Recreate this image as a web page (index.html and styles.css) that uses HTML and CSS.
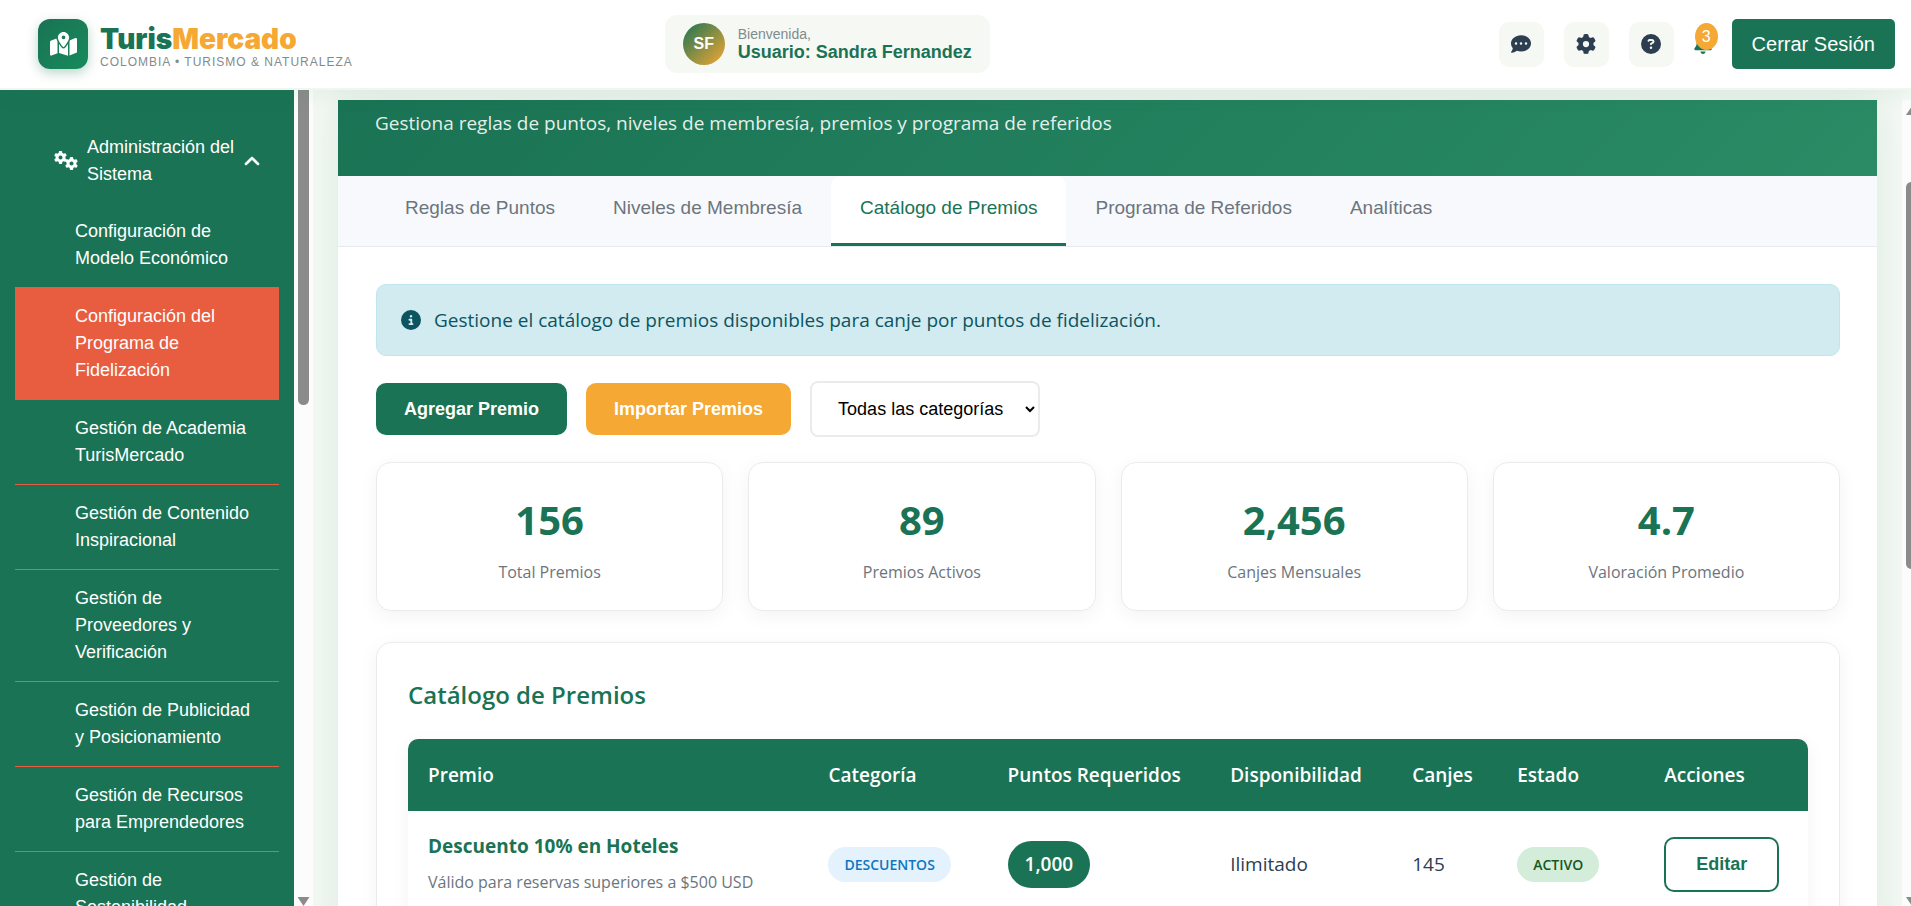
FILE: index.html
```html
<!DOCTYPE html>
<html lang="es">
    <head>
        <title>TurisMercado - Programa de Fidelización</title>
        <meta charset="UTF-8">
        <meta name="viewport" content="width=device-width, initial-scale=1.0">
        <link rel="stylesheet" href="styles.css">
    </head>
    <body>
        <svg class="sprite" aria-hidden="true">
            <symbol id="gear" viewBox="0 0 512 512"><path d="M495.9 166.6c3.2 8.7 .5 18.4-6.4 24.6l-43.3 39.4c1.1 8.3 1.7 16.8 1.7 25.4s-.6 17.1-1.7 25.4l43.3 39.4c6.9 6.2 9.6 15.9 6.4 24.6c-4.4 11.9-9.7 23.3-15.8 34.3l-4.7 8.1c-6.6 11-14 21.4-22.1 31.2c-5.9 7.2-15.7 9.6-24.5 6.8l-55.7-17.7c-13.4 10.3-28.2 18.9-44 25.4l-12.5 57.1c-2 9.1-9 16.3-18.2 17.8c-13.8 2.3-28 3.5-42.5 3.5s-28.7-1.2-42.5-3.5c-9.2-1.5-16.2-8.7-18.2-17.8l-12.5-57.1c-15.8-6.5-30.6-15.1-44-25.4L83.1 425.9c-8.8 2.8-18.6 .3-24.5-6.8c-8.1-9.8-15.5-20.2-22.1-31.2l-4.7-8.1c-6.1-11-11.4-22.4-15.8-34.3c-3.2-8.7-.5-18.4 6.4-24.6l43.3-39.4C64.6 273.1 64 264.6 64 256s.6-17.1 1.7-25.4L22.4 191.2c-6.9-6.2-9.6-15.9-6.4-24.6c4.4-11.9 9.7-23.3 15.8-34.3l4.7-8.1c6.6-11 14-21.4 22.1-31.2c5.9-7.2 15.7-9.6 24.5-6.8l55.7 17.7c13.4-10.3 28.2-18.9 44-25.4l12.5-57.1c2-9.1 9-16.3 18.2-17.8C227.3 1.2 241.5 0 256 0s28.7 1.2 42.5 3.5c9.2 1.5 16.2 8.7 18.2 17.8l12.5 57.1c15.8 6.5 30.6 15.1 44 25.4l55.7-17.7c8.8-2.8 18.6-.3 24.5 6.8c8.1 9.8 15.5 20.2 22.1 31.2l4.7 8.1c6.1 11 11.4 22.4 15.8 34.3zM256 336a80 80 0 1 0 0-160 80 80 0 1 0 0 160z"/></symbol>
        </svg>

        <header class="header">
            <div class="logo">
                <div class="logo-icon">
                    <svg width="27" height="24" viewBox="0 0 576 512" fill="currentColor"><path d="M408 120c0 54.6-73.1 151.9-105.2 192c-7.7 9.6-22 9.6-29.6 0C241.1 271.9 168 174.6 168 120C168 53.7 221.7 0 288 0s120 53.7 120 120zm8 80.4c3.5-6.9 6.7-13.8 9.6-20.6c.5-1.2 1-2.5 1.5-3.7l116-46.4C558.9 123.4 576 135 576 152V422.8c0 9.8-6 18.6-15.1 22.3L416 503V200.4zM137.6 138.3c2.4 14.1 7.2 28.3 12.8 41.5c2.9 6.8 6.1 13.7 9.6 20.6V451.8L32.9 502.7C17.1 509 0 497.4 0 480.4V209.6c0-9.8 6-18.6 15.1-22.3l122.6-49zM327.8 332c13.9-17.4 35.7-45.7 56.2-77V504.3L192 449.4V255c20.5 31.3 42.3 59.6 56.2 77c20.5 25.6 59.1 25.6 79.6 0zM288 152a40 40 0 1 0 0-80 40 40 0 1 0 0 80z"/></svg>
                </div>
                <div class="logo-text">
                    <div class="logo-name">Turis<span>Mercado</span></div>
                    <div class="logo-tagline">COLOMBIA • TURISMO &amp; NATURALEZA</div>
                </div>
            </div>

            <div class="user-box">
                <div class="avatar">SF</div>
                <div>
                    <div class="user-welcome">Bienvenida,</div>
                    <div class="user-name">Usuario: Sandra Fernandez</div>
                </div>
            </div>

            <div class="header-actions">
                <button type="button" class="icon-btn" aria-label="Mensajes">
                    <svg width="20" height="20" viewBox="0 0 512 512" fill="currentColor"><path d="M256 448c141.4 0 256-93.1 256-208S397.4 32 256 32S0 125.1 0 240c0 45.1 17.7 86.8 47.7 120.9c-1.9 24.5-11.4 46.3-21.4 62.9c-5.5 9.2-11.1 16.6-15.2 21.6c-2.1 2.5-3.7 4.4-4.9 5.7l-1.6 1.7c-4.6 4.6-5.9 11.4-3.4 17.4c2.5 6 8.3 9.9 14.8 9.9c28.7 0 57.6-8.9 81.6-19.3c22.9-10 42.4-21.9 54.3-30.6c31.8 11.5 67 17.9 104.1 17.9zM128 208a32 32 0 1 1 0 64 32 32 0 1 1 0-64zm128 0a32 32 0 1 1 0 64 32 32 0 1 1 0-64zm96 32a32 32 0 1 1 64 0 32 32 0 1 1 -64 0z"/></svg>
                </button>
                <button type="button" class="icon-btn" aria-label="Ajustes">
                    <svg width="20" height="20" fill="currentColor"><use href="#gear"/></svg>
                </button>
                <button type="button" class="icon-btn" aria-label="Ayuda">
                    <svg width="20" height="20" viewBox="0 0 512 512" fill="currentColor"><path d="M256 512A256 256 0 1 0 256 0a256 256 0 1 0 0 512zM169.8 165.3c7.9-22.3 29.1-37.3 52.8-37.3h58.3c34.9 0 63.1 28.3 63.1 63.1c0 22.6-12.1 43.5-31.7 54.8L280 264.4c-.2 13-10.9 23.6-24 23.6c-13.3 0-24-10.7-24-24V250.5c0-8.6 4.6-16.5 12.1-20.8l44.3-25.4c4.7-2.7 7.6-7.7 7.6-13.1c0-8.4-6.8-15.1-15.1-15.1H222.6c-3.4 0-6.4 2.1-7.5 5.3l-.4 1.2c-4.4 12.5-18.2 19-30.6 14.6s-19-18.2-14.6-30.6l.4-1.2zM224 352a32 32 0 1 1 64 0 32 32 0 1 1 -64 0z"/></svg>
                </button>
                <button type="button" class="bell" aria-label="Notificaciones">
                    <svg width="18" height="20" viewBox="0 0 448 512" fill="currentColor"><path d="M224 0c-17.7 0-32 14.3-32 32V51.2C119 66 64 130.6 64 208v18.8c0 47-17.3 92.4-48.5 127.6l-7.4 8.3c-8.4 9.4-10.4 22.9-5.3 34.4S19.4 416 32 416H416c12.6 0 24-7.4 29.2-18.9s3.1-25-5.3-34.4l-7.4-8.3C401.3 319.2 384 273.9 384 226.8V208c0-77.4-55-142-128-156.8V32c0-17.7-14.3-32-32-32zm45.3 493.3c12-12 18.7-28.3 18.7-45.3H224 160c0 17 6.7 33.3 18.7 45.3s28.3 18.7 45.3 18.7s33.3-6.7 45.3-18.7z"/></svg>
                    <span class="bell-count">3</span>
                </button>
                <button type="button" class="logout">Cerrar Sesión</button>
            </div>
        </header>

        <div class="page">
            <nav class="sidebar">
                <a href="#" class="menu-head">
                    <svg class="gears" width="25" height="20" fill="currentColor">
                        <use href="#gear" x="0" y="0" width="13" height="13"/>
                        <use href="#gear" x="11" y="6" width="13" height="13"/>
                    </svg>
                    <span class="menu-title">Administración del Sistema</span>
                    <svg width="16" height="16" viewBox="0 0 512 448" fill="currentColor" stroke="currentColor" stroke-width="30"><path d="M233.4 105.4c12.5-12.5 32.8-12.5 45.3 0l192 192c12.5 12.5 12.5 32.8 0 45.3s-32.8 12.5-45.3 0L256 173.3 86.6 342.6c-12.5 12.5-32.8 12.5-45.3 0s-12.5-32.8 0-45.3l192-192z"/></svg>
                </a>
                <a href="#" class="menu-item">Configuración de Modelo Económico</a>
                <a href="#" class="menu-item active">Configuración del Programa de Fidelización</a>
                <a href="#" class="menu-item">Gestión de Academia TurisMercado</a>
                <a href="#" class="menu-item">Gestión de Contenido Inspiracional</a>
                <a href="#" class="menu-item">Gestión de Proveedores y Verificación</a>
                <a href="#" class="menu-item">Gestión de Publicidad y Posicionamiento</a>
                <a href="#" class="menu-item">Gestión de Recursos para Emprendedores</a>
                <a href="#" class="menu-item">Gestión de Sostenibilidad</a>
            </nav>
            <div class="side-scroll">
                <div class="side-thumb"></div>
                <div class="arrow-down"></div>
            </div>

            <main class="main">
                <div class="panel">
                    <div class="hero">Gestiona reglas de puntos, niveles de membresía, premios y programa de referidos</div>

                    <div class="tabs">
                        <button type="button" class="tab">Reglas de Puntos</button>
                        <button type="button" class="tab">Niveles de Membresía</button>
                        <button type="button" class="tab active">Catálogo de Premios</button>
                        <button type="button" class="tab">Programa de Referidos</button>
                        <button type="button" class="tab">Analíticas</button>
                    </div>

                    <div class="content">
                        <div class="info">
                            <svg width="20" height="20" viewBox="0 0 512 512" fill="currentColor"><path d="M256 512A256 256 0 1 0 256 0a256 256 0 1 0 0 512zM216 336h24V272H216c-13.3 0-24-10.7-24-24s10.7-24 24-24h48c13.3 0 24 10.7 24 24v88h8c13.3 0 24 10.7 24 24s-10.7 24-24 24H216c-13.3 0-24-10.7-24-24s10.7-24 24-24zm40-208a32 32 0 1 1 0 64 32 32 0 1 1 0-64z"/></svg>
                            <span>Gestione el catálogo de premios disponibles para canje por puntos de fidelización.</span>
                        </div>

                        <div class="toolbar">
                            <button type="button" class="btn">Agregar Premio</button>
                            <button type="button" class="btn btn-orange">Importar Premios</button>
                            <select class="filter" aria-label="Categoría">
                                <option>Todas las categorías</option>
                            </select>
                        </div>

                        <div class="stats">
                            <div class="stat">
                                <div class="stat-number">156</div>
                                <div class="stat-label">Total Premios</div>
                            </div>
                            <div class="stat">
                                <div class="stat-number">89</div>
                                <div class="stat-label">Premios Activos</div>
                            </div>
                            <div class="stat">
                                <div class="stat-number">2,456</div>
                                <div class="stat-label">Canjes Mensuales</div>
                            </div>
                            <div class="stat">
                                <div class="stat-number">4.7</div>
                                <div class="stat-label">Valoración Promedio</div>
                            </div>
                        </div>

                        <section class="catalog">
                            <h2>Catálogo de Premios</h2>
                            <table class="table">
                                <thead>
                                    <tr>
                                        <th class="col-premio">Premio</th>
                                        <th class="col-categoria">Categoría</th>
                                        <th class="col-puntos">Puntos Requeridos</th>
                                        <th class="col-disp">Disponibilidad</th>
                                        <th class="col-canjes">Canjes</th>
                                        <th class="col-estado">Estado</th>
                                        <th>Acciones</th>
                                    </tr>
                                </thead>
                                <tbody>
                                    <tr>
                                        <td>
                                            <div class="prize-name">Descuento 10% en Hoteles</div>
                                            <div class="prize-text">Válido para reservas superiores a $500 USD</div>
                                        </td>
                                        <td><span class="badge badge-blue">DESCUENTOS</span></td>
                                        <td><span class="points">1,000</span></td>
                                        <td>Ilimitado</td>
                                        <td>145</td>
                                        <td><span class="badge badge-green">ACTIVO</span></td>
                                        <td><button type="button" class="btn-outline">Editar</button></td>
                                    </tr>
                                </tbody>
                            </table>
                        </section>
                    </div>
                </div>
            </main>
            <div class="main-scroll">
                <div class="arrow-up"></div>
                <div class="main-thumb"></div>
                <div class="arrow-down"></div>
            </div>
        </div>
    </body>
</html>
```
FILE: styles.css
```css
*{
    box-sizing: border-box;
}
body{
    margin: 0;
    height: 100vh;
    overflow: hidden;
    display: flex;
    flex-direction: column;
    font-family: "Open Sans", "Noto Sans", sans-serif;
    font-size: 19px;
    color: #2c3e50;
    background-color: #f5f9f4;
}
button, select{
    font-family: "Liberation Sans", Arial, sans-serif;
    cursor: pointer;
}
.sprite{
    display: none;
}

/* header */
.header{
    flex: none;
    height: 90px;
    display: flex;
    align-items: center;
    padding: 0 16px 0 38px;
    background-color: white;
    border-bottom: 2px solid #f1f6f0;
    box-shadow: 0 4px 20px rgba(26,115,84,0.08);
    font-family: "Liberation Sans", Arial, sans-serif;
    position: relative;
    z-index: 2;
}
.logo{
    flex: 9 0 0;
    display: flex;
    align-items: center;
    gap: 12px;
}
.logo-icon{
    width: 50px;
    height: 50px;
    border-radius: 12px;
    display: flex;
    align-items: center;
    justify-content: center;
    color: white;
    background: linear-gradient(135deg, #1a7354, #178a5c);
    box-shadow: 0 4px 12px rgba(26,115,84,0.3);
}
.logo-text{
    padding-top: 3px;
}
.logo-name{
    font-family: Inter, sans-serif;
    font-size: 28px;
    font-weight: 900;
    line-height: 32px;
    color: #1a7354;
}
.logo-name span{
    color: #f5a833;
}
.logo-tagline{
    font-size: 12px;
    line-height: 14px;
    letter-spacing: 1px;
    color: #7f8c8d;
}
.user-box{
    display: flex;
    align-items: center;
    gap: 13px;
    padding: 8px 18px;
    border-radius: 12px;
    background-color: #f6f8f4;
}
.avatar{
    width: 42px;
    height: 42px;
    border-radius: 50%;
    display: flex;
    align-items: center;
    justify-content: center;
    font-size: 16px;
    font-weight: bold;
    color: white;
    background: linear-gradient(135deg, #1a7354, #f5a833);
}
.user-welcome{
    font-size: 14px;
    line-height: 16px;
    color: #7f8c8d;
}
.user-name{
    font-size: 18px;
    line-height: 20px;
    font-weight: bold;
    color: #1a7354;
}
.header-actions{
    flex: 13 0 0;
    display: flex;
    align-items: center;
    justify-content: flex-end;
    gap: 20px;
}
.icon-btn{
    width: 45px;
    height: 45px;
    padding: 0;
    border: none;
    border-radius: 10px;
    display: flex;
    align-items: center;
    justify-content: center;
    color: #2c3e50;
    background-color: #f6f8f4;
}
.bell{
    position: relative;
    display: flex;
    padding: 0;
    border: none;
    background: none;
    color: #1a7354;
}
.bell-count{
    position: absolute;
    top: -11px;
    left: 1px;
    width: 23px;
    height: 27px;
    border-radius: 50%;
    font-size: 16px;
    line-height: 27px;
    color: white;
    background-color: #f5a833;
}
.logout{
    height: 50px;
    padding: 0 20px;
    border: none;
    border-radius: 5px;
    font-size: 20px;
    color: white;
    background-color: #1a7354;
}

/* sidebar */
.page{
    flex: 1;
    min-height: 0;
    display: flex;
}
.sidebar{
    flex: none;
    width: 294px;
    padding: 29px 15px 0;
    overflow: hidden;
    background-color: #1a7354;
    font-family: "Liberation Sans", Arial, sans-serif;
    font-size: 18px;
    line-height: 27px;
}
.sidebar a{
    color: white;
    text-decoration: none;
}
.menu-head{
    display: flex;
    align-items: center;
    gap: 8px;
    padding: 15px 19px 15px 39px;
}
.menu-head svg{
    flex: none;
}
.menu-title{
    flex: 1;
}
.menu-item{
    display: block;
    padding: 15px 20px 15px 60px;
    border-bottom: 1px solid #e85d40;
}
.menu-item.active{
    background-color: #e85d40;
}

/* scrollbars */
.side-scroll, .main-scroll{
    flex: none;
    overflow: hidden;
    display: flex;
    flex-direction: column;
    background-color: #fcfcfc;
}
.side-scroll{
    width: 19px;
    align-items: center;
    justify-content: space-between;
}
.side-thumb{
    width: 11px;
    height: 315px;
    border-radius: 0 0 6px 6px;
    background-color: #8b8b8b;
}
.main-scroll{
    width: 9px;
    margin-top: 10px;
    padding: 6px 0 0 4px;
}
.main-thumb{
    width: 11px;
    height: 387px;
    margin: 67px 0 auto;
    border-radius: 6px;
    background-color: #8b8b8b;
}
.arrow-up, .arrow-down{
    flex: none;
    width: 12px;
    height: 9px;
    background-color: #8b8b8b;
}
.arrow-up{
    clip-path: polygon(50% 0, 100% 100%, 0 100%);
}
.arrow-down{
    clip-path: polygon(0 0, 100% 0, 50% 100%);
}

/* main panel */
.main{
    flex: 1;
    min-width: 0;
    overflow: hidden;
    padding: 10px 25px 0;
}
.panel{
    min-height: 100%;
    background-color: white;
    box-shadow: 0 0 40px rgba(26,115,84,0.12);
}
.hero{
    padding: 8px 37px 38px;
    line-height: 30px;
    color: rgba(255,255,255,0.9);
    background: linear-gradient(135deg, #1a7354, #2a8b65);
}
.tabs{
    display: flex;
    padding: 0 38px;
    background-color: #f8f9fc;
    border-bottom: 1px solid #e3ebf0;
}
.tab{
    padding: 20px 29px 23px;
    border: none;
    border-bottom: 3px solid transparent;
    font-size: 19px;
    line-height: 24px;
    color: #6c757d;
    background: none;
}
.tab.active{
    color: #1a7354;
    background-color: white;
    border-bottom-color: #1a7354;
    border-radius: 10px 10px 0 0;
}
.content{
    padding: 37px 37px 0 38px;
}
.info{
    display: flex;
    align-items: center;
    gap: 13px;
    padding: 20px 24px;
    margin-bottom: 25px;
    border: 1px solid #bee5eb;
    border-radius: 10px;
    line-height: 30px;
    color: #0c5460;
    background-color: #d1ebf0;
}
.toolbar{
    display: flex;
    align-items: center;
    gap: 19px;
    margin-bottom: 25px;
}
.btn{
    height: 52px;
    padding: 0 28px;
    border: none;
    border-radius: 10px;
    font-size: 18px;
    font-weight: bold;
    color: white;
    background-color: #1a7354;
}
.btn-orange{
    background-color: #f5a833;
}
.filter{
    height: 56px;
    width: 230px;
    padding: 0 4px 0 22px;
    border: 2px solid #e9ecef;
    border-radius: 8px;
    font-size: 18px;
    color: black;
    background-color: white;
}
.stats{
    display: grid;
    grid-template-columns: repeat(4, 1fr);
    gap: 25px;
    margin-bottom: 31px;
}
.stat{
    padding: 27px 25px 24px;
    border: 1px solid #e9ecef;
    border-radius: 15px;
    text-align: center;
    background-color: white;
    box-shadow: 0 5px 20px rgba(0,0,0,0.05);
}
.stat-number{
    font-size: 40px;
    font-weight: bold;
    line-height: 60px;
    color: #1a7354;
}
.stat-label{
    padding-top: 8px;
    font-size: 16px;
    line-height: 28px;
    color: #6c757d;
}
.catalog{
    padding: 31px;
    border: 1px solid #e9ecef;
    border-radius: 15px;
    background-color: white;
    box-shadow: 0 5px 20px rgba(0,0,0,0.05);
}
.catalog h2{
    margin: 0 0 24px;
    font-size: 24px;
    font-weight: 600;
    line-height: 41px;
    color: #1a7354;
}
.table{
    width: 100%;
    table-layout: fixed;
    border-spacing: 0;
    border-radius: 10px;
    overflow: hidden;
    box-shadow: 0 5px 20px rgba(0,0,0,0.05);
}
.table th{
    padding: 20px;
    font-weight: 600;
    line-height: 32px;
    text-align: left;
    white-space: nowrap;
    color: white;
    background-color: #1a7354;
}
.table td{
    padding: 20px;
    line-height: 30px;
}
.col-premio{
    width: 28.6%;
}
.col-categoria{
    width: 12.8%;
}
.col-puntos{
    width: 15.9%;
}
.col-disp{
    width: 13%;
}
.col-canjes{
    width: 7.5%;
}
.col-estado{
    width: 10.5%;
}
.prize-name{
    margin-bottom: 6px;
    font-weight: bold;
    color: #1a7354;
}
.prize-text{
    font-size: 16px;
    white-space: nowrap;
    color: #6c757d;
}
.badge{
    display: inline-block;
    padding: 0 16px;
    border-radius: 18px;
    font-size: 14px;
    font-weight: 600;
    line-height: 35px;
}
.badge-blue{
    color: #0d76c0;
    background-color: #e3f2fd;
}
.badge-green{
    color: #155724;
    background-color: #d4edda;
}
.points{
    display: inline-block;
    padding: 0 17px;
    border-radius: 24px;
    font-weight: 600;
    line-height: 47px;
    color: white;
    background-color: #1a7354;
}
.btn-outline{
    height: 55px;
    padding: 0 30px;
    border: 2px solid #1a7354;
    border-radius: 10px;
    font-size: 18px;
    font-weight: bold;
    color: #1a7354;
    background-color: white;
}
```
